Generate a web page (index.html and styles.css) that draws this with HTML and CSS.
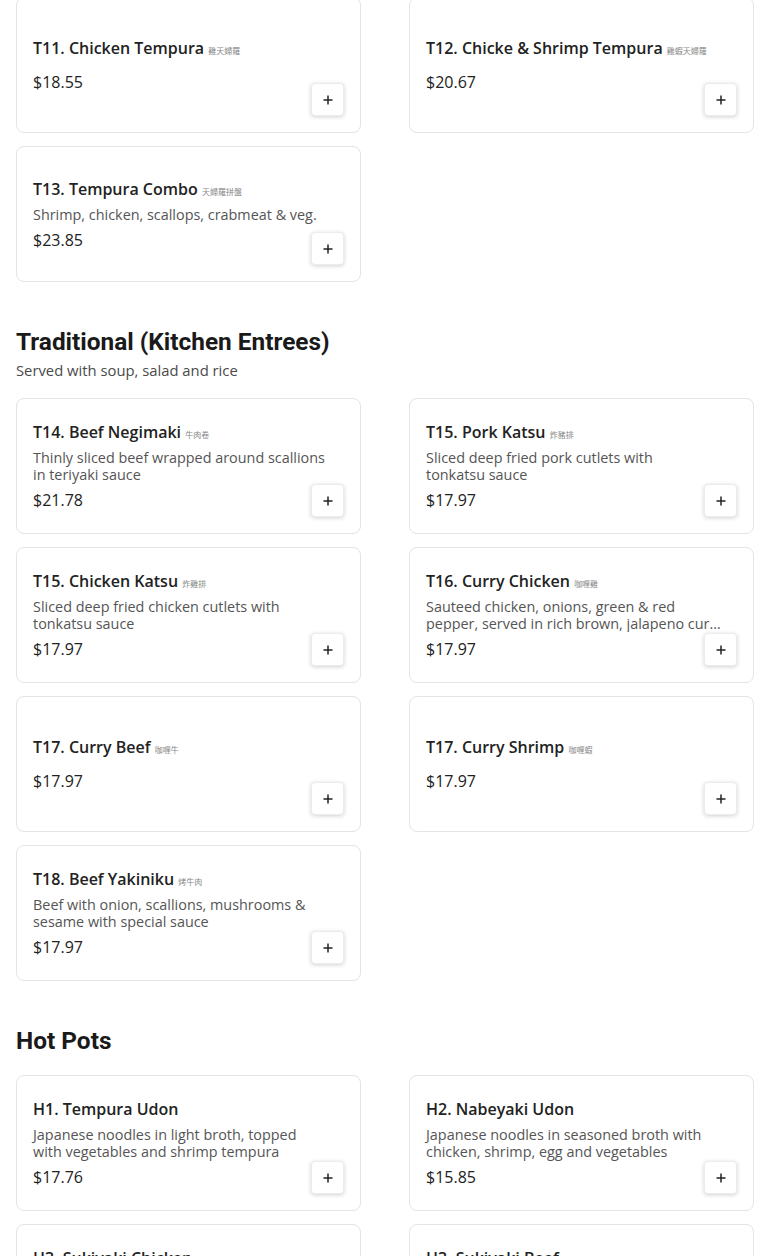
FILE: index.html
```html
<!DOCTYPE html>
<html lang="en">
<head>
<meta charset="utf-8">
<title>Menu</title>
<link rel="stylesheet" href="styles.css">
</head>
<body>
<main class="menu">
  <section class="section section-first">
    <div class="grid">
      <div class="card">
        <div class="info">
          <div class="title">T11. Chicken Tempura <span class="cjk">雞天婦羅</span></div>
          <div class="price">$18.55</div>
        </div>
        <button class="add" aria-label="Add"><svg viewBox="0 0 12 12" width="12" height="12"><path d="M6 1.5v9M1.5 6h9" stroke="#222" stroke-width="1.5" fill="none"/></svg></button>
      </div>
      <div class="card">
        <div class="info">
          <div class="title">T12. Chicke &amp; Shrimp Tempura <span class="cjk">雞蝦天婦羅</span></div>
          <div class="price">$20.67</div>
        </div>
        <button class="add" aria-label="Add"><svg viewBox="0 0 12 12" width="12" height="12"><path d="M6 1.5v9M1.5 6h9" stroke="#222" stroke-width="1.5" fill="none"/></svg></button>
      </div>
      <div class="card">
        <div class="info">
          <div class="title">T13. Tempura Combo <span class="cjk">天婦羅拼盤</span></div>
          <div class="desc">Shrimp, chicken, scallops, crabmeat &amp; veg.</div>
          <div class="price">$23.85</div>
        </div>
        <button class="add" aria-label="Add"><svg viewBox="0 0 12 12" width="12" height="12"><path d="M6 1.5v9M1.5 6h9" stroke="#222" stroke-width="1.5" fill="none"/></svg></button>
      </div>
    </div>
  </section>

  <section class="section">
    <header class="section-head">
      <h2 class="section-title">Traditional (Kitchen Entrees)</h2>
      <p class="section-sub">Served with soup, salad and rice</p>
    </header>
    <div class="grid">
      <div class="card">
        <div class="info">
          <div class="title">T14. Beef Negimaki <span class="cjk">牛肉卷</span></div>
          <div class="desc">Thinly sliced beef wrapped around scallions<br>in teriyaki sauce</div>
          <div class="price">$21.78</div>
        </div>
        <button class="add" aria-label="Add"><svg viewBox="0 0 12 12" width="12" height="12"><path d="M6 1.5v9M1.5 6h9" stroke="#222" stroke-width="1.5" fill="none"/></svg></button>
      </div>
      <div class="card">
        <div class="info">
          <div class="title">T15. Pork Katsu <span class="cjk">炸豬排</span></div>
          <div class="desc">Sliced deep fried pork cutlets with<br>tonkatsu sauce</div>
          <div class="price">$17.97</div>
        </div>
        <button class="add" aria-label="Add"><svg viewBox="0 0 12 12" width="12" height="12"><path d="M6 1.5v9M1.5 6h9" stroke="#222" stroke-width="1.5" fill="none"/></svg></button>
      </div>
      <div class="card">
        <div class="info">
          <div class="title">T15. Chicken Katsu <span class="cjk">炸雞排</span></div>
          <div class="desc">Sliced deep fried chicken cutlets with<br>tonkatsu sauce</div>
          <div class="price">$17.97</div>
        </div>
        <button class="add" aria-label="Add"><svg viewBox="0 0 12 12" width="12" height="12"><path d="M6 1.5v9M1.5 6h9" stroke="#222" stroke-width="1.5" fill="none"/></svg></button>
      </div>
      <div class="card">
        <div class="info">
          <div class="title">T16. Curry Chicken <span class="cjk">咖喱雞</span></div>
          <div class="desc desc-clamp">Sauteed chicken, onions, green &amp; red<br>pepper, served in rich brown, jalapeno curry sauce</div>
          <div class="price">$17.97</div>
        </div>
        <button class="add" aria-label="Add"><svg viewBox="0 0 12 12" width="12" height="12"><path d="M6 1.5v9M1.5 6h9" stroke="#222" stroke-width="1.5" fill="none"/></svg></button>
      </div>
      <div class="card">
        <div class="info">
          <div class="title">T17. Curry Beef <span class="cjk">咖喱牛</span></div>
          <div class="price">$17.97</div>
        </div>
        <button class="add" aria-label="Add"><svg viewBox="0 0 12 12" width="12" height="12"><path d="M6 1.5v9M1.5 6h9" stroke="#222" stroke-width="1.5" fill="none"/></svg></button>
      </div>
      <div class="card">
        <div class="info">
          <div class="title">T17. Curry Shrimp <span class="cjk">咖喱蝦</span></div>
          <div class="price">$17.97</div>
        </div>
        <button class="add" aria-label="Add"><svg viewBox="0 0 12 12" width="12" height="12"><path d="M6 1.5v9M1.5 6h9" stroke="#222" stroke-width="1.5" fill="none"/></svg></button>
      </div>
      <div class="card">
        <div class="info">
          <div class="title">T18. Beef Yakiniku <span class="cjk">烤牛肉</span></div>
          <div class="desc">Beef with onion, scallions, mushrooms &amp;<br>sesame with special sauce</div>
          <div class="price">$17.97</div>
        </div>
        <button class="add" aria-label="Add"><svg viewBox="0 0 12 12" width="12" height="12"><path d="M6 1.5v9M1.5 6h9" stroke="#222" stroke-width="1.5" fill="none"/></svg></button>
      </div>
    </div>
  </section>

  <section class="section">
    <header class="section-head">
      <h2 class="section-title">Hot Pots</h2>
    </header>
    <div class="grid">
      <div class="card">
        <div class="info">
          <div class="title">H1. Tempura Udon</div>
          <div class="desc">Japanese noodles in light broth, topped<br>with vegetables and shrimp tempura</div>
          <div class="price">$17.76</div>
        </div>
        <button class="add" aria-label="Add"><svg viewBox="0 0 12 12" width="12" height="12"><path d="M6 1.5v9M1.5 6h9" stroke="#222" stroke-width="1.5" fill="none"/></svg></button>
      </div>
      <div class="card">
        <div class="info">
          <div class="title">H2. Nabeyaki Udon</div>
          <div class="desc">Japanese noodles in seasoned broth with<br>chicken, shrimp, egg and vegetables</div>
          <div class="price">$15.85</div>
        </div>
        <button class="add" aria-label="Add"><svg viewBox="0 0 12 12" width="12" height="12"><path d="M6 1.5v9M1.5 6h9" stroke="#222" stroke-width="1.5" fill="none"/></svg></button>
      </div>
      <div class="card">
        <div class="info">
          <div class="title">H3. Sukiyaki Chicken</div>
          <div class="desc">Sliced chicken with tofu, vegetables and<br>noodles in sukiyaki broth</div>
          <div class="price">$17.97</div>
        </div>
        <button class="add" aria-label="Add"><svg viewBox="0 0 12 12" width="12" height="12"><path d="M6 1.5v9M1.5 6h9" stroke="#222" stroke-width="1.5" fill="none"/></svg></button>
      </div>
      <div class="card">
        <div class="info">
          <div class="title">H3. Sukiyaki Beef</div>
          <div class="desc">Sliced beef with tofu, vegetables and<br>noodles in sukiyaki broth</div>
          <div class="price">$17.97</div>
        </div>
        <button class="add" aria-label="Add"><svg viewBox="0 0 12 12" width="12" height="12"><path d="M6 1.5v9M1.5 6h9" stroke="#222" stroke-width="1.5" fill="none"/></svg></button>
      </div>
    </div>
  </section>
</main>
</body>
</html>
```

FILE: styles.css
```css
* { box-sizing: border-box; }

html, body {
  margin: 0;
  padding: 0;
  background: #fff;
}

body {
  font-family: "Open Sans", "Noto Sans", sans-serif;
  color: #1f1f1f;
  overflow: hidden;
}

.menu {
  padding: 0 16px;
}

.section {
  margin-top: 44px;
}

.section-first {
  margin-top: -3px;
}

.section-head {
  margin-bottom: 18px;
}

.section-title {
  margin: 0;
  font-family: "Roboto", "Inter", sans-serif;
  font-weight: 700;
  font-size: 24.4px;
  line-height: 32px;
  color: #1a1a1a;
}

.section-sub {
  margin: 2px 0 0;
  font-size: 14.8px;
  line-height: 20px;
  color: #4a4a4a;
}

.grid {
  display: grid;
  grid-template-columns: repeat(2, minmax(0, 1fr));
  column-gap: 48px;
  row-gap: 13px;
}

.card {
  height: 136px;
  border: 1px solid #e4e4e4;
  border-radius: 8px;
  background: #fff;
  padding: 16px;
  display: grid;
  grid-template-columns: minmax(0, 1fr);
  grid-template-rows: minmax(0, 1fr);
}

.info {
  grid-area: 1 / 1;
  align-self: center;
  display: flex;
  flex-direction: column;
  min-width: 0;
}

.title {
  font-size: 16px;
  line-height: 20px;
  height: 20px;
  font-weight: 600;
  color: #222;
  margin-bottom: 7px;
  white-space: nowrap;
}

.cjk {
  font-family: "Noto Sans CJK TC", sans-serif;
  font-size: 8px;
  line-height: 1;
  font-weight: 400;
  color: #888;
}

.desc {
  font-size: 14.4px;
  line-height: 17px;
  color: #555;
}

.desc-clamp {
  display: -webkit-box;
  -webkit-line-clamp: 2;
  -webkit-box-orient: vertical;
  overflow: hidden;
  padding-right: 12px;
}

.price {
  margin-top: 7px;
  font-size: 16px;
  line-height: 20px;
  color: #222;
}

.add {
  grid-area: 1 / 1;
  align-self: end;
  justify-self: end;
  width: 33px;
  height: 33px;
  padding: 0;
  border: 1px solid #ececec;
  border-radius: 4px;
  background: #fff;
  box-shadow: 0 1px 4px rgba(0, 0, 0, 0.18);
  display: flex;
  align-items: center;
  justify-content: center;
  cursor: pointer;
}
```
